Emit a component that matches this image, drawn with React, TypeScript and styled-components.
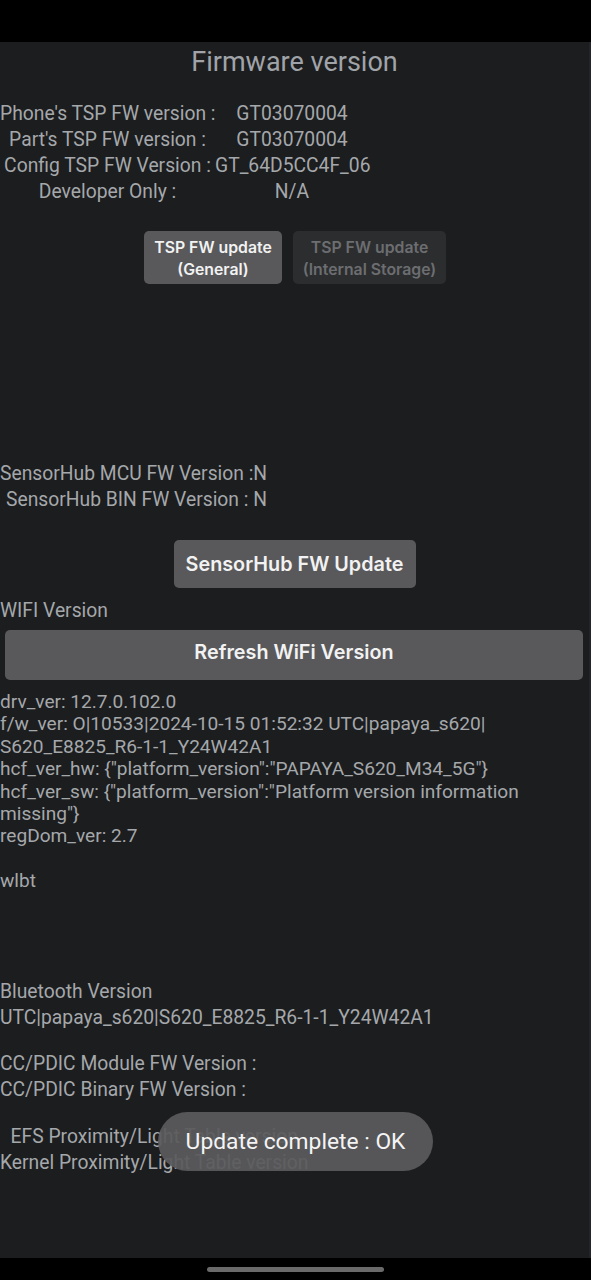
import React from "react";
import styled, { createGlobalStyle } from "styled-components";

const GlobalStyle = createGlobalStyle`
  html, body {
    margin: 0;
    padding: 0;
    background: #000;
  }
  * {
    box-sizing: border-box;
  }
`;

const tspRows = [
  { label: "Phone's TSP FW version :", value: "GT03070004" },
  { label: "Part's TSP FW version :", value: "GT03070004" },
  { label: "Config TSP FW Version :", value: "GT_64D5CC4F_06" },
  { label: "Developer Only :", value: "N/A" },
];

const wifiLines = [
  "drv_ver: 12.7.0.102.0",
  "f/w_ver: O|10533|2024-10-15 01:52:32 UTC|papaya_s620|\nS620_E8825_R6-1-1_Y24W42A1",
  'hcf_ver_hw: {"platform_version":"PAPAYA_S620_M34_5G"}',
  'hcf_ver_sw: {"platform_version":"Platform version information\nmissing"}',
  "regDom_ver: 2.7",
  "",
  "wlbt",
];

export default function App() {
  return (
    <>
      <GlobalStyle />
      <StScreen>
        <StStatusBar />
        <StContent>
          <StTitle>Firmware version</StTitle>

          <StInfoGrid>
            {tspRows.map((row) => (
              <React.Fragment key={row.label}>
                <StCell>{row.label}</StCell>
                <StCell>{row.value}</StCell>
              </React.Fragment>
            ))}
          </StInfoGrid>

          <StTspButtons>
            <StSmallButton $width={138}>
              TSP FW update
              <br />
              (General)
            </StSmallButton>
            <StSmallButton $width={153} disabled>
              TSP FW update
              <br />
              (Internal Storage)
            </StSmallButton>
          </StTspButtons>

          <StSensorHub>
            <StLine>SensorHub MCU FW Version :N</StLine>
            <StLine>SensorHub BIN FW Version : N</StLine>
          </StSensorHub>

          <StSensorButtonRow>
            <StBigButton>SensorHub FW Update</StBigButton>
          </StSensorButtonRow>

          <StLine>WIFI Version</StLine>
          <StWideButton>Refresh WiFi Version</StWideButton>

          <StWifiInfo>
            {wifiLines.map((line, i) => (
              <StWifiLine key={i}>{line || "\u00a0"}</StWifiLine>
            ))}
          </StWifiInfo>

          <StSection>
            <StLine>Bluetooth Version</StLine>
            <StLine>UTC|papaya_s620|S620_E8825_R6-1-1_Y24W42A1</StLine>
          </StSection>

          <StPdic>
            <StLine>CC/PDIC Module FW Version :</StLine>
            <StLine>CC/PDIC Binary FW Version :</StLine>
          </StPdic>

          <StProximity>
            <StLine>EFS Proximity/Light Table version</StLine>
            <StLine>Kernel Proximity/Light Table version</StLine>
          </StProximity>

          <StToast>Update complete : OK</StToast>
        </StContent>
        <StNavBar>
          <StHandle />
        </StNavBar>
      </StScreen>
    </>
  );
}

const StScreen = styled.div`
  width: 591px;
  height: 1280px;
  display: flex;
  flex-direction: column;
  background: #000;
  font-family: Roboto, "Liberation Sans", sans-serif;
  color: #a5a8ab;
  overflow: hidden;
`;

const StStatusBar = styled.div`
  height: 42px;
  flex-shrink: 0;
  background: #000;
`;

const StContent = styled.div`
  position: relative;
  height: 1216px;
  flex-shrink: 0;
  background: #1c1d1f;
  border-right: 2px solid #232427;
  overflow: hidden;
`;

const StTitle = styled.h1`
  margin: 0;
  padding-top: 4px;
  height: 59px;
  line-height: 32px;
  font-size: 27px;
  font-weight: 400;
  text-align: center;
  color: #a0a4a8;
`;

const StInfoGrid = styled.div`
  display: grid;
  grid-template-columns: 215px 154px;
  font-size: 19.3px;
  line-height: 26px;
`;

const StCell = styled.div`
  text-align: center;
  white-space: nowrap;
`;

const StTspButtons = styled.div`
  display: flex;
  justify-content: center;
  gap: 11px;
  margin-top: 26px;
  padding-left: 1px;
`;

const StSmallButton = styled.button<{ $width: number }>`
  width: ${(p) => p.$width}px;
  height: 53px;
  padding: 3px 0 0;
  border: none;
  border-radius: 5px;
  background: ${(p) => (p.disabled ? "#2c2d2f" : "#59595b")};
  color: ${(p) => (p.disabled ? "#6c6e71" : "#f2f2f2")};
  font-family: Inter, Roboto, sans-serif;
  font-size: 15.8px;
  font-weight: 600;
  line-height: 22px;
  white-space: nowrap;
`;

const StLine = styled.div`
  font-size: 19.3px;
  line-height: 26px;
  white-space: nowrap;
`;

const StSensorHub = styled.div`
  width: 267px;
  margin-top: 177px;
  text-align: right;
`;

const StSensorButtonRow = styled.div`
  display: flex;
  justify-content: center;
  margin-top: 27px;
  margin-bottom: 10px;
`;

const StBigButton = styled.button`
  width: 242px;
  height: 48px;
  padding: 0;
  border: none;
  border-radius: 5px;
  background: #59595b;
  color: #f2f2f2;
  font-family: Inter, Roboto, sans-serif;
  font-size: 19.8px;
  font-weight: 600;
`;

const StWideButton = styled(StBigButton)`
  display: block;
  height: 50px;
  margin: 6px 6px 0 5px;
  padding-bottom: 7px;
  width: calc(100% - 11px);
`;

const StWifiInfo = styled.div`
  margin-top: 11px;
`;

const StWifiLine = styled.div`
  font-size: 19.1px;
  line-height: 22.4px;
  white-space: pre-line;
`;

const StSection = styled.div`
  margin-top: 86px;
`;

const StPdic = styled.div`
  margin-top: 20px;
`;

const StProximity = styled.div`
  width: fit-content;
  margin-top: 21px;
  text-align: center;
  line-height: 25px;
`;

const StToast = styled.div`
  position: absolute;
  left: 158px;
  top: 1070px;
  width: 275px;
  height: 59px;
  border-radius: 30px;
  background: rgba(90, 90, 92, 0.93);
  color: #f4f4f4;
  font-size: 22.8px;
  display: flex;
  align-items: center;
  justify-content: center;
`;

const StNavBar = styled.div`
  flex: 1;
  background: #000;
  display: flex;
  justify-content: center;
  padding-top: 9px;
`;

const StHandle = styled.div`
  width: 177px;
  height: 5px;
  border-radius: 3px;
  background: #6a6a6a;
`;
